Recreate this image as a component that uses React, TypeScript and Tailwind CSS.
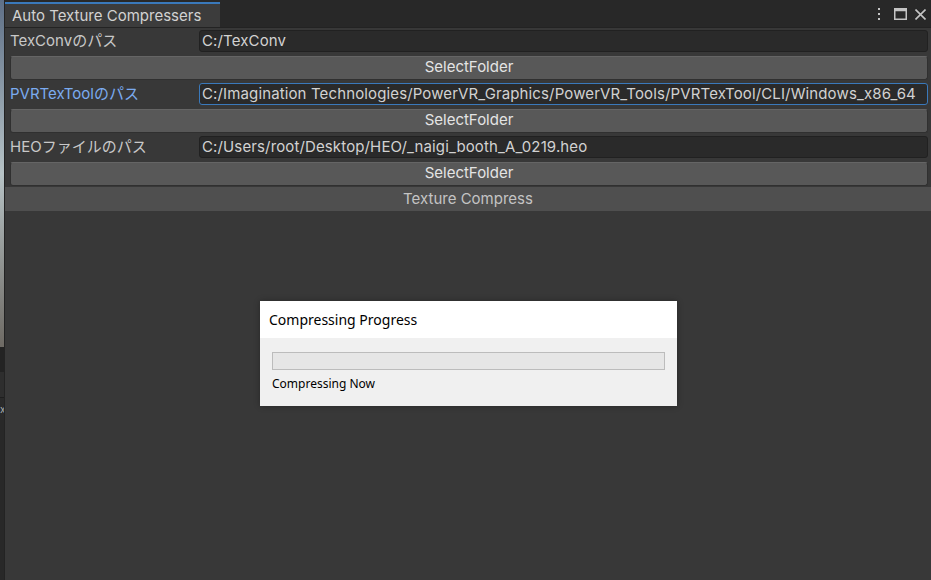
import {Fragment} from 'react';

const font = {fontFamily: 'Inter, "Noto Sans CJK JP", sans-serif'};

function PathRow(props: {label: string; value: string; focused?: boolean}) {
  const {label, value, focused} = props;
  return (
    <div className="flex flex-row items-center h-[26px]">
      <div className={`w-[194px] pl-[5px] text-[15px] ${focused ? 'text-[#7babf0]' : 'text-[#c8c8c8]'}`}>
        {label}
      </div>
      <div
        className={`flex-1 h-[22px] mr-[3px] rounded-[3px] bg-[#2a2a2a] border flex items-center px-[2px] text-[15px] tracking-[0.13px] text-[#d2d2d2] whitespace-nowrap overflow-hidden ${
          focused ? 'border-[#3a79bb]' : 'border-[#212121]'
        }`}
      >
        {value}
      </div>
    </div>
  );
}

function SelectButton() {
  return (
    <div className="h-[27px] flex items-center pl-[5px] pr-[3px]">
      <div className="w-full h-[24px] rounded-[3px] bg-[#585858] border border-[#303030] border-t-[#656565] flex items-center justify-center text-[15px] text-[#e4e4e4]">
        SelectFolder
      </div>
    </div>
  );
}

export default function App() {
  const rows = [
    {label: 'TexConvのパス', value: 'C:/TexConv'},
    {label: 'PVRTexToolのパス', value: 'C:/Imagination Technologies/PowerVR_Graphics/PowerVR_Tools/PVRTexTool/CLI/Windows_x86_64', focused: true},
    {label: 'HEOファイルのパス', value: 'C:/Users/root/Desktop/HEO/_naigi_booth_A_0219.heo'},
  ];
  return (
    <div className="w-[931px] h-[580px] flex flex-row bg-[#383838] overflow-hidden" style={font}>
      {/* scene strip behind the window */}
      <div className="w-[4px] flex flex-col">
        <div className="h-[347px] bg-gradient-to-b from-[#5f7087] via-[#b7c3c6] to-[#6e6a64]" />
        <div className="h-[25px] bg-[#232323]" />
        <div className="h-[26px] bg-[#2e2e2e] border-b border-[#1e1e1e]" />
        <div className="h-[22px] bg-[#2a2a2a] text-[10px] leading-[22px] text-[#aaaaaa] overflow-hidden">x</div>
        <div className="flex-1 bg-[#282828]" />
      </div>
      <div className="w-[1px] bg-[#232323]" />
      <div className="flex-1 flex flex-col">
        {/* tab bar */}
        <div className="h-[28px] bg-[#282828] flex flex-row items-end border-b border-[#232323]">
          <div className="w-[215px] h-[25px] bg-[#3c3c3c] border-t-2 border-[#3a79bb] pl-[7px] pt-[2px] flex items-center text-[15px] text-[#d2d2d2]">
            Auto Texture Compressers
          </div>
          <div className="flex-1" />
          <div className="h-[27px] flex flex-row items-center pr-[5px] pt-[1px] text-[#c4c4c4]">
            <svg width="4" height="14" viewBox="0 0 4 14" className="mr-[13px]">
              <rect x="1" y="1" width="2" height="2" fill="currentColor" />
              <rect x="1" y="6" width="2" height="2" fill="currentColor" />
              <rect x="1" y="11" width="2" height="2" fill="currentColor" />
            </svg>
            <svg width="13" height="12" viewBox="0 0 13 12" className="mr-[8px]">
              <rect x="0.75" y="0.75" width="11.5" height="10.5" fill="none" stroke="currentColor" strokeWidth="1.5" />
              <rect x="0.75" y="0.75" width="11.5" height="2.5" fill="currentColor" />
            </svg>
            <svg width="11" height="11" viewBox="0 0 11 11">
              <path d="M0.5 0.5L10.5 10.5M10.5 0.5L0.5 10.5" stroke="currentColor" strokeWidth="1.6" />
            </svg>
          </div>
        </div>
        <div className="flex flex-col">
          {rows.map((r, i) => (
            <Fragment key={i}>
              <PathRow label={r.label} value={r.value} focused={r.focused} />
              <SelectButton />
            </Fragment>
          ))}
        </div>
        <div className="h-[24px] bg-[#4f4f4f] flex items-center justify-center text-[15px] text-[#c4c4c4]">
          Texture Compress
        </div>
        {/* progress dialog */}
        <div className="pt-[90px] pl-[255px]">
          <div
            className="w-[417px] h-[105px] flex flex-col bg-[#f0f0f0] shadow-[0_0_6px_rgba(0,0,0,0.3)]"
            style={{fontFamily: '"Segoe UI", "Noto Sans", sans-serif'}}
          >
            <div className="h-[37px] bg-white flex items-center pl-[9px] text-[14px] text-black">
              Compressing Progress
            </div>
            <div className="px-[12px] pt-[14px]">
              <div className="h-[18px] bg-[#e6e6e6] border border-[#bcbcbc]" />
              <div className="mt-[5px] text-[12px] text-black">Compressing Now</div>
            </div>
          </div>
        </div>
      </div>
    </div>
  );
}
